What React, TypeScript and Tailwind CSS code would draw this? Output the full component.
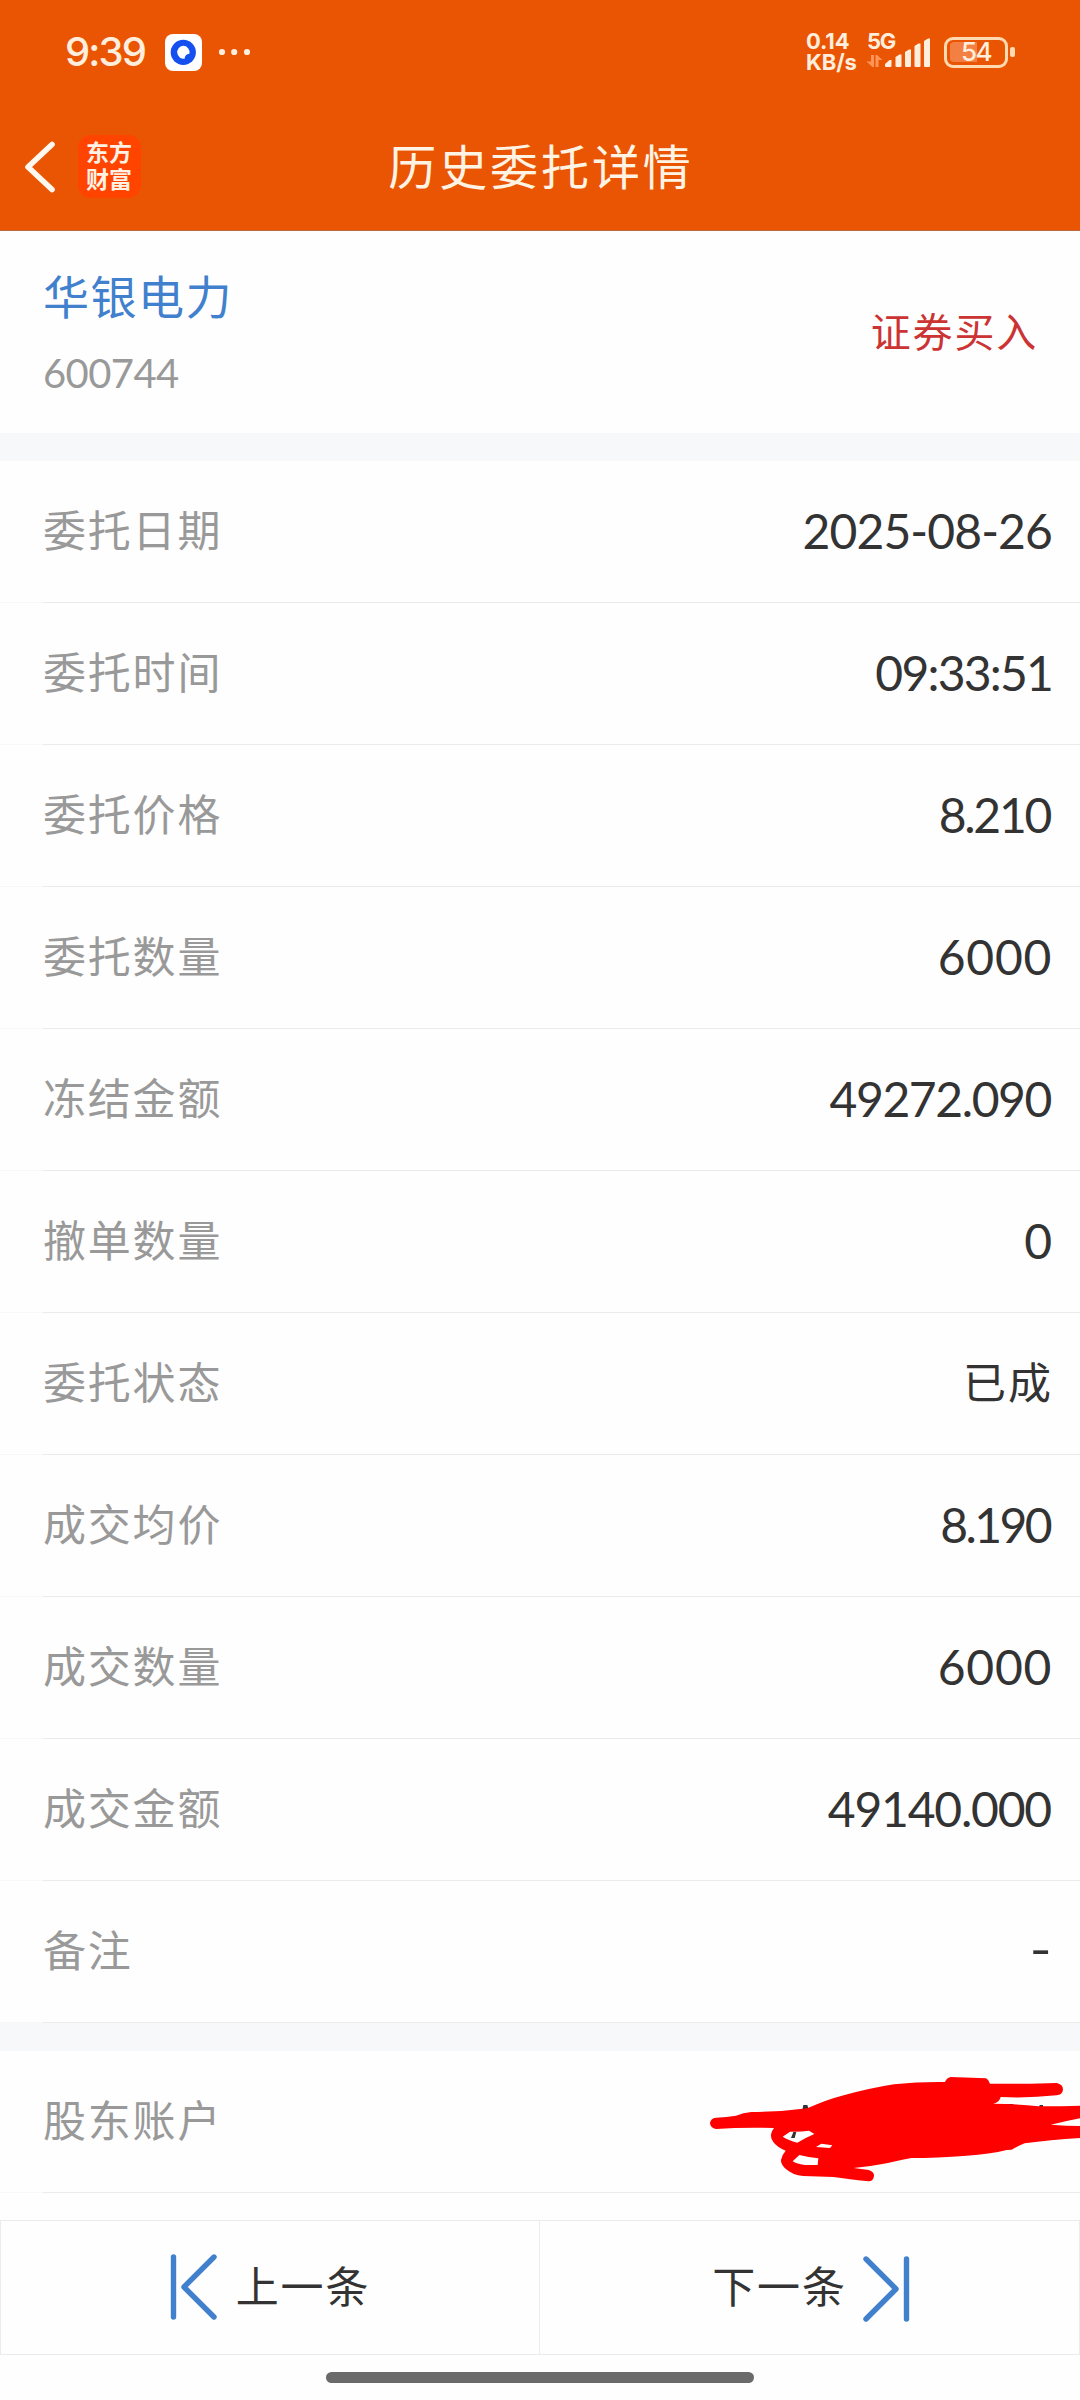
import React from 'react';
import clsx from 'clsx';

interface DetailItem {
  label: string;
  value: string;
  className?: string;
}

const details: DetailItem[] = [
  { label: '委托日期', value: '2025-08-26', className: 'text-[48px] tracking-[-0.9px]' },
  { label: '委托时间', value: '09:33:51', className: 'text-[48px] tracking-[-1.8px]' },
  { label: '委托价格', value: '8.210', className: 'text-[48px] tracking-[-2.3px] mr-[2px]' },
  { label: '委托数量', value: '6000', className: 'text-[48px] tracking-[0.7px]' },
  { label: '冻结金额', value: '49272.090', className: 'text-[48px] tracking-[-1.4px] mr-[1px]' },
  { label: '撤单数量', value: '0', className: 'text-[48px]' },
  { label: '委托状态', value: '已成', className: 'text-[43px] tracking-[2px] -mr-[1px]' },
  { label: '成交均价', value: '8.190', className: 'text-[48px] tracking-[-2.6px] mr-[2px]' },
  { label: '成交数量', value: '6000', className: 'text-[48px] tracking-[0.7px]' },
  { label: '成交金额', value: '49140.000', className: 'text-[48px] tracking-[-1.2px] mr-[1px]' },
  { label: '备注', value: '-', className: 'text-[48px] scale-x-125 origin-right pb-[6px]' },
];

function StatusBar() {
  return (
    <div className="flex h-[104px] items-center justify-between pl-[65px] pr-[65px] text-[#ffeedd]">
      <div className="flex items-center">
        <span className="w-[100px] text-[40px] font-medium leading-none tracking-[-1.9px]">9:39</span>
        <svg width="37" height="37" viewBox="0 0 37 37">
          <rect width="37" height="37" rx="8" fill="#fff" />
          <circle cx="18.3" cy="18.3" r="12.6" fill="#1450f0" />
          <path d="M18 11.8a6.5 6.5 0 1 0 1.6 12.9c.2-3 1.8-4.6 4.8-4.9A6.5 6.5 0 0 0 18 11.8z" fill="#fff" />
        </svg>
        <svg className="ml-[16px]" width="34" height="8" viewBox="0 0 34 8" fill="currentColor">
          <circle cx="4" cy="4" r="3.1" />
          <circle cx="16.2" cy="4" r="3.1" />
          <circle cx="29" cy="4" r="3.1" />
        </svg>
      </div>
      <div className="flex items-center">
        <div className="w-[60px] text-[22px] font-bold leading-[21px] tracking-[-0.1px]">
          <div>0.14</div>
          <div>KB/s</div>
        </div>
        <div className="relative h-[38px] w-[78px]">
          <span className="absolute left-[1px] top-[-2px] text-[22px] font-bold leading-[20px] tracking-[-1.2px]">5G</span>
          <svg className="absolute left-0 top-0" width="66" height="38" viewBox="0 0 66 38" fill="currentColor">
            <g fill="#ff9657">
              <path d="M5 22h3v12H6.500L0.500 28.500H5z" />
              <path d="M9.500 34h3v-7H16.500L11 22H9.500z" />
            </g>
            <path d="M19 31l4.500-4h2v6q0 1-1 1h-4.500q-1 0-1-1z" />
            <path d="M29.500 24l4-2.500h2V33q0 1-1 1h-4q-1 0-1-1z" />
            <path d="M39 19l4-2.500h2V33q0 1-1 1h-4q-1 0-1-1z" />
            <path d="M48.500 13l4-2.500h2V33q0 1-1 1h-4q-1 0-1-1z" />
            <path d="M58 8l4-2.500h2V33q0 1-1 1h-4q-1 0-1-1z" />
          </svg>
        </div>
        <div className="relative flex h-[31px] w-[64px] items-center justify-center rounded-[9px] border-[3.5px] border-[#ffd9b0]">
          <div className="absolute left-[3px] top-[2px] h-[20px] w-[27px] rounded-l-[4px] bg-[#f47f42]" />
          <span className="relative text-[26px] font-medium leading-none tracking-[-1.5px]">54</span>
        </div>
        <div className="ml-[2px] h-[10px] w-[5px] rounded-[2px] bg-[#ffd9b0]" />
      </div>
    </div>
  );
}

function TitleBar() {
  return (
    <div className="relative flex h-[126px] items-center justify-center">
      <div className="absolute left-[22px] top-[31px] flex items-center">
        <svg width="36" height="63" viewBox="0 0 36 63" fill="none" stroke="#fff8ee" strokeWidth="5.600" strokeLinecap="round" strokeLinejoin="round">
          <path d="M30 9.500L6 32L30 54.500" />
        </svg>
        <div className="ml-[20px] flex h-[63px] w-[63px] flex-col items-center justify-center rounded-[13px] bg-[#ff4400] pr-[1px] text-[23px] font-bold leading-[27px] text-[#fff1e4]">
          <span>东方</span>
          <span>财富</span>
        </div>
      </div>
      <h1 className="pl-[2px] pt-[2px] text-[48px] leading-none tracking-[2.900px] text-[#fff4e4]">历史委托详情</h1>
    </div>
  );
}

function DetailRow({ label, value, className, children }: DetailItem & { children?: React.ReactNode }) {
  return (
    <div className="relative flex h-[142px]">
      <div className="w-[43px] border-b border-[#f7f7f7]" />
      <div className="flex flex-1 items-center justify-between border-b border-[#ebebeb] pr-[28px]">
        <span className="text-[43px] leading-none tracking-[1.800px] text-[#999999]">{label}</span>
        <span className={clsx("pb-[2px] font-['Lato','Noto_Sans_CJK_SC',sans-serif] leading-none text-[#333333]", className)}>
          {value}
        </span>
      </div>
      {children}
    </div>
  );
}

// Hand-drawn marker covering the account number
function Scribble() {
  return (
    <svg className="absolute right-0 top-[-51px]" width="400" height="220" viewBox="0 0 1200 660">
      <g fill="#333">
        <path d="M370 315h12l6 20h-22z" />
        <path d="M984 312h14l8 6h-28z" />
        <path d="M1079 315h10v8h-12z" />
      </g>
      <path
        fill="#ff0000"
        d="M108 353Q140 352 168 347Q190 338 214 336Q300 336 382 325Q440 299 483 288Q570 264 642 253Q715 245 795 246Q799 234 812 231L918 235Q928 240 930 251L1050 251L1130 249Q1149 253 1149 269Q1147 284 1130 286Q1045 295 962 291Q959 307 940 311Q1010 312 1075 319Q1150 319 1200 317V355Q1160 363 1112 374Q1160 378 1200 378V414Q1110 420 1034 430Q1010 440 995 449L980 450Q930 463 860 467Q770 474 694 474Q660 480 620 490Q570 500 521 504L566 510Q583 515 582 528Q580 544 566 544Q520 539 460 531L370 528Q337 526 315 505Q302 492 303 480Q306 464 317 452Q290 441 280 426Q270 412 274 400Q276 392 282 384Q190 381 108 387Q91 384 90 370Q91 355 108 353Z"
      />
      <g fill="#fff">
        <path d="M308 410L330 395Q360 396 387 392L403 402Q375 414 352 428Q325 421 308 410Z" />
        <path d="M408 441L424 431L457 436L450 444Z" />
        <path d="M338 484L358 465Q385 472 415 475L413 495H374Q350 492 338 484Z" />
      </g>
      <path d="M340 396h9l-5 18h-11z" fill="#333" />
    </svg>
  );
}

function PagerIcon({ flip }: { flip?: boolean }) {
  return (
    <svg className={clsx(flip && 'rotate-180')} width="48" height="68" viewBox="0 0 48 68" fill="none" stroke="#4080cd" strokeWidth="5.400" strokeLinecap="round" strokeLinejoin="round">
      <path d="M3.500 3V63" />
      <path d="M44 3L14 33L44 63" />
    </svg>
  );
}

export default function App() {
  return (
    <div className="flex h-[2400px] w-[1080px] flex-col overflow-hidden bg-[#fefefe] font-['Inter','Noto_Sans_CJK_SC',sans-serif]">
      <header className="border-b border-[#bd683f] bg-[#ea5504]">
        <StatusBar />
        <TitleBar />
      </header>

      <section className="flex h-[202px] items-center justify-between pl-[43px] pr-[42px]">
        <div className="flex flex-col gap-[33px] pt-[3px]">
          <span className="text-[46px] leading-[46px] tracking-[1.500px] text-[#4080cd]">华银电力</span>
          <span className="font-['Lato',sans-serif] text-[40px] leading-[40px] tracking-[-0.600px] text-[#999999]">600744</span>
        </div>
        <span className="pt-[2px] text-[40px] leading-none tracking-[1.800px] text-[#cc3333]">证券买入</span>
      </section>

      <div className="h-[28px] bg-[#f6f8fa]" />

      <section>
        {details.map((item) => (
          <DetailRow key={item.label} {...item} />
        ))}
      </section>

      <div className="h-[28px] bg-[#f6f8fa]" />

      <DetailRow label="股东账户" value="">
        <Scribble />
      </DetailRow>

      <footer className="mt-[27px]">
        <div className="flex h-[135px] border border-[#ebebeb] text-[43px] leading-none text-[#333333]">
          <button className="flex w-1/2 items-center justify-center gap-[18px] border-r border-[#ebebeb]">
            <PagerIcon />
            <span className="tracking-[1.800px]">上一条</span>
          </button>
          <button className="flex w-1/2 items-center justify-center gap-[15px] pl-[3px]">
            <span className="tracking-[1.800px]">下一条</span>
            <PagerIcon flip />
          </button>
        </div>
        <div className="mx-auto mt-[17px] h-[11px] w-[428px] rounded-full bg-[#6a6a6a]" />
      </footer>
    </div>
  );
}
